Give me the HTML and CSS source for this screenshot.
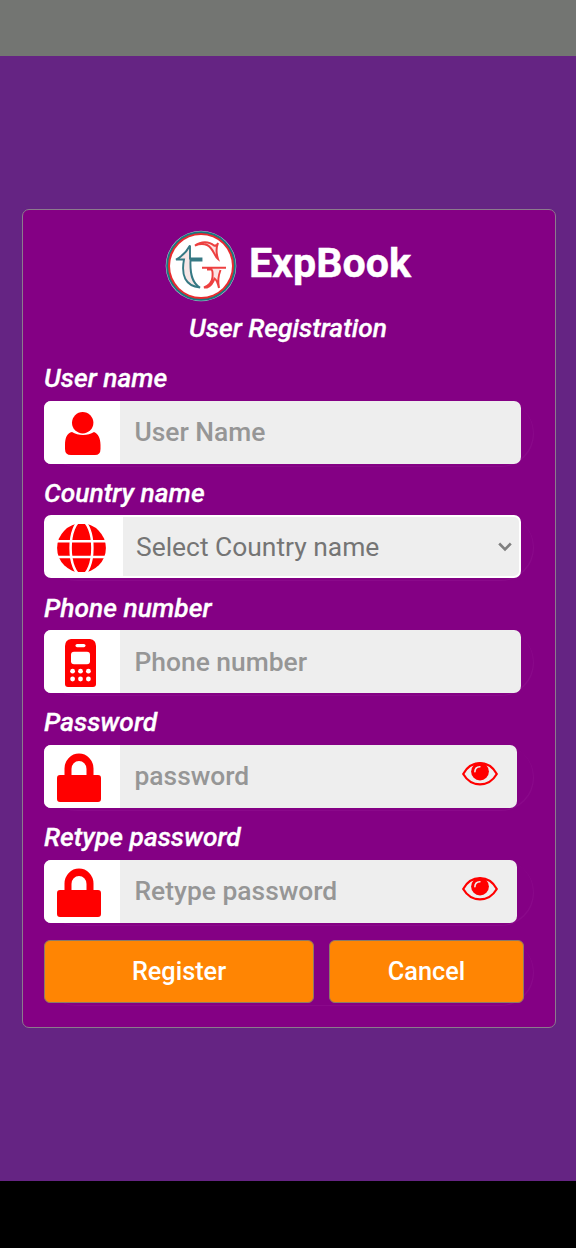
FILE: index.html
```
<!DOCTYPE html>
<html lang="en">
<head>
<meta charset="utf-8">
<title>ExpBook</title>
<link rel="stylesheet" href="styles.css">
</head>
<body>
<svg class="defs" width="0" height="0">
  <symbol id="lock" viewBox="0 0 44 49">
    <path d="M7.500 22V15.500a14.500 15 0 0 1 29 0V22H41a3 3 0 0 1 3 3v21a3 3 0 0 1-3 3H3a3 3 0 0 1-3-3V25a3 3 0 0 1 3-3zM14.500 22h15v-6a7.500 8 0 0 0-15 0z" fill="red" fill-rule="evenodd"/>
  </symbol>
  <symbol id="eye" viewBox="0 0 36 24">
    <path d="M1.200 12C5 5 11 1.200 18 1.200S31 5 34.800 12C31 18.500 25 22.300 18 22.300S5 18.500 1.200 12z" fill="none" stroke="red" stroke-width="2.200" stroke-linejoin="round"/>
    <circle cx="18" cy="9.500" r="8.900" fill="red"/>
    <path d="M12.900 9.800c0-3 1.900-5 5-5.100" fill="none" stroke="#eee" stroke-width="1.600" stroke-linecap="round"/>
  </symbol>
</svg>
<header class="status-bar"></header>
<main class="page">
  <form class="card">
    <div class="brand">
      <svg class="logo" viewBox="0 0 72 72">
        <circle cx="36" cy="36" r="35.300" fill="#a9c9c9"/>
        <circle cx="36" cy="36" r="34.800" fill="#187880"/>
        <circle cx="36" cy="36" r="33" fill="#e82a2e"/>
        <circle cx="36" cy="36" r="31" fill="#fff"/>
        <path d="M25 15.500C22 21 18 26 11 29.500h8C16 45 20 56 35 57.500C27 53 25 44 25.500 30.500h11v-2H25z" fill="#f8e6e6" stroke="#367984" stroke-width="1.900"/>
        <path d="M30 15.500C36 11 44 11 49 15.500C51 16 52.500 14.500 53 13C51 18 51 23 53 29C49 26 48.500 18 42 15C38 13.500 34 14 30 15.500z" fill="#fbe3e3" stroke="#ed4040" stroke-width="2"/>
        <path d="M47.500 38.500H54.500Q51.500 49 54 57.500Q52.500 50 49.500 48Q47.500 50 47.500 47z" fill="#fbe3e3"/>
        <path d="M37 37.800H61M42 39.500H46.500Q48 41 47.500 47Q47 54 39 57.500H42Q47 56 49.500 48.500Q52 50 54 58Q52 49 55.500 40" fill="none" stroke="#ed4040" stroke-width="2"/>
      </svg>
      <h1 class="title">ExpBook</h1>
    </div>
    <h2 class="subtitle">User Registration</h2>
    <div class="field">
      <label class="label">User name</label>
      <div class="row"><div class="control">
        <span class="icon"><svg width="36" height="43" viewBox="0 0 36 43"><circle cx="17.700" cy="10.800" r="10.700" fill="red"/><path d="M7 20C13 24 23 24 29 20C33 21.500 35.500 26 35.500 33V37Q35.500 43 30 43H6Q0 43 0 37V33C0 26 2 21 7 20z" fill="red"/></svg></span>
        <span class="placeholder">User Name</span>
      </div></div>
    </div>
    <div class="field">
      <label class="label">Country name</label>
      <div class="row"><div class="control select">
        <span class="icon"><svg width="49" height="48" viewBox="0 0 49 48"><ellipse cx="24.500" cy="24" rx="24.400" ry="24.500" fill="red"/><path d="M0 17.300h49M0 33h49" stroke="#fff" stroke-width="2.500"/><ellipse cx="24.500" cy="24" rx="10.900" ry="27" fill="none" stroke="#fff" stroke-width="2.500"/></svg></span>
        <span class="placeholder">Select Country name</span>
        <svg class="chevron" width="14" height="10" viewBox="0 0 14 10"><path d="M1.200 1.500L7 7.500L12.800 1.500" fill="none" stroke="#808080" stroke-width="2.600"/></svg>
      </div></div>
    </div>
    <div class="field">
      <label class="label">Phone number</label>
      <div class="row"><div class="control">
        <span class="icon"><svg width="31" height="48" viewBox="0 0 31 48"><path d="M6 0h19q6 1 6 7v38q0 3-3 3H3q-3 0-3-3V7Q0 1 6 0z" fill="red"/><rect x="10.500" y="5" width="10" height="3.200" rx="1.600" fill="#fff"/><rect x="6" y="12.700" width="19" height="12.600" rx="3" fill="#fff"/><g fill="#fff"><circle cx="7.600" cy="32.200" r="2.400"/><circle cx="15.500" cy="32.200" r="2.400"/><circle cx="23.400" cy="32.200" r="2.400"/><circle cx="7.600" cy="40" r="2.400"/><circle cx="15.500" cy="40" r="2.400"/><circle cx="23.400" cy="40" r="2.400"/></g></svg></span>
        <span class="placeholder">Phone number</span>
      </div></div>
    </div>
    <div class="field">
      <label class="label">Password</label>
      <div class="row"><div class="control secret">
        <span class="icon locked"><svg width="44" height="49"><use href="#lock"/></svg></span>
        <span class="placeholder">password</span>
        <svg class="eye" width="36" height="24"><use href="#eye"/></svg>
      </div></div>
    </div>
    <div class="field">
      <label class="label">Retype password</label>
      <div class="row"><div class="control secret">
        <span class="icon locked"><svg width="44" height="49"><use href="#lock"/></svg></span>
        <span class="placeholder">Retype password</span>
        <svg class="eye" width="36" height="24"><use href="#eye"/></svg>
      </div></div>
    </div>
    <div class="row actions">
      <button class="button register" type="button">Register</button>
      <button class="button cancel" type="button">Cancel</button>
    </div>
  </form>
</main>
<footer class="nav-bar"></footer>
</body>
</html>
```

FILE: styles.css
```
* { box-sizing: border-box; }
body {
  margin: 0;
  height: 1248px;
  display: flex;
  flex-direction: column;
  overflow: hidden;
  font-family: Roboto, "Liberation Sans", sans-serif;
  background: #652483;
}
.defs { position: absolute; }
.status-bar { height: 56px; background: #737572; }
.page { flex: 1; padding: 153px 20px 0 22px; }
.nav-bar { height: 67px; background: #000; }
.card {
  width: 534px;
  height: 819px;
  padding: 20px 21px 0;
  border: 1px solid #8c7a8c;
  border-radius: 7px;
  background: #840084;
  color: #fff;
}
.brand { display: flex; justify-content: center; align-items: center; width: 488px; height: 72px; gap: 12px; }
.logo { width: 72px; height: 72px; }
.title { margin: -6px 0 0; font-size: 41.200px; line-height: 48px; font-weight: 700; -webkit-text-stroke: 0.4px #fff; }
.subtitle {
  width: 488px;
  margin: 9px 0 0;
  height: 52px;
  line-height: 34px;
  text-align: center;
  font-size: 26.400px;
  font-style: italic;
  font-weight: 500;
  -webkit-text-stroke: 0.3px #fff;
}
.field { height: 114.800px; }
.label {
  display: block;
  height: 37.500px;
  line-height: 30px;
  font-size: 26.400px;
  font-style: italic;
  font-weight: 500;
  -webkit-text-stroke: 0.3px #fff;
}
.row {
  width: 490px;
  height: 66px;
  border-radius: 33px;
  box-shadow: inset -1px -1px 0 #8a098a;
}
.control {
  display: flex;
  align-items: center;
  width: 477px;
  height: 63px;
  border-radius: 7px;
  overflow: hidden;
  background: #eee;
  color: #969696;
}
.secret { width: 473px; }
.icon {
  display: flex;
  align-items: center;
  width: 76px;
  height: 100%;
  padding: 2px 0 0 21px;
  background: #fff;
}
.locked { padding: 3px 0 0 13px; }
.placeholder {
  flex: 1;
  padding: 0 0 0 14.500px;
  font-size: 26.400px;
  font-weight: 500;
  line-height: 32px;
}
.select { border: 2px solid #fff; color: #757575; }
.select .icon { padding-left: 11px; width: 77px; }
.select .placeholder { padding: 1px 0 0 13px; font-weight: 400; font-size: 26.400px; }
.chevron { margin-right: 7px; }
.eye { margin: 0 19px 5px 0; }
.actions { display: flex; gap: 15px; margin-top: 3px; }
.button {
  height: 63px;
  padding: 1px 0 0;
  border: 1px solid #8c7a68;
  border-radius: 6px;
  background: #ff8503;
  color: #fff;
  font: 500 25.300px/30px Roboto, "Liberation Sans", sans-serif;
}
.register { width: 270px; }
.cancel { width: 195px; }
```
